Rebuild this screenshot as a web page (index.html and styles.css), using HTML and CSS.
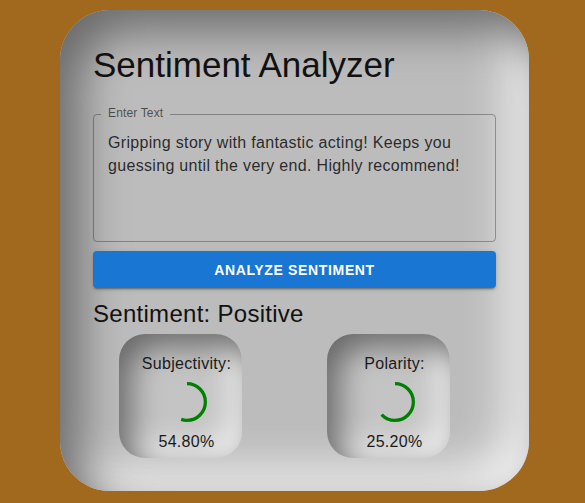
FILE: index.html
```html
<!DOCTYPE html>
<html lang="en">
<head>
<meta charset="utf-8">
<title>Sentiment Analyzer</title>
<link rel="stylesheet" href="styles.css">
</head>
<body>
<main class="card">
  <h1 class="title">Sentiment Analyzer</h1>
  <fieldset class="field">
    <legend class="field-label">Enter Text</legend>
    <textarea class="field-input" rows="4">Gripping story with fantastic acting! Keeps you guessing until the very end. Highly recommend!</textarea>
  </fieldset>
  <button class="analyze" type="button">Analyze Sentiment</button>
  <h2 class="result">Sentiment: Positive</h2>
  <div class="metrics">
    <div class="metric">
      <div class="metric-box">
        <p class="metric-label">Subjectivity:</p>
        <svg class="ring" width="40" height="40" viewBox="22 22 44 44">
          <circle cx="44" cy="44" r="20.2" fill="none" stroke="#008000" stroke-width="3.6" stroke-dasharray="126.92" stroke-dashoffset="57.37"></circle>
        </svg>
        <p class="metric-value">54.80%</p>
      </div>
    </div>
    <div class="metric">
      <div class="metric-box">
        <p class="metric-label">Polarity:</p>
        <svg class="ring" width="40" height="40" viewBox="22 22 44 44">
          <circle cx="44" cy="44" r="20.2" fill="none" stroke="#008000" stroke-width="3.6" stroke-dasharray="126.92" stroke-dashoffset="47.47"></circle>
        </svg>
        <p class="metric-value">25.20%</p>
      </div>
    </div>
  </div>
</main>
</body>
</html>
```
FILE: styles.css
```css
html, body {
  margin: 0;
  padding: 0;
}
body {
  background: #a0691e;
  font-family: "Liberation Sans", Arial, sans-serif;
  color: rgba(0, 0, 0, 0.87);
  padding-top: 10px;
  height: 503px;
  box-sizing: border-box;
  overflow: hidden;
}
.card {
  box-sizing: border-box;
  width: 469px;
  margin-left: 60px;
  padding: 34px 33px 33px;
  border-radius: 50px;
  background: #bcbcbc;
  box-shadow: inset 20px 20px 45px #6a6a6a, inset -20px -20px 45px #f6f6f6;
}
.title {
  margin: 0;
  font-size: 35px;
  font-weight: 400;
  line-height: 42px;
  letter-spacing: 0;
  color: #111;
}
.field {
  margin: 21px 0 0;
  padding: 0 7px;
  border: 1px solid rgba(0, 0, 0, 0.3);
  border-radius: 4px;
  min-width: 0;
}
.field-label {
  padding: 0 7px 3px;
  font-size: 12px;
  line-height: 12px;
  letter-spacing: 0.15px;
  color: rgba(0, 0, 0, 0.6);
}
.field-input {
  display: block;
  box-sizing: border-box;
  width: 100%;
  height: 119px;
  margin: 0;
  padding: 8.5px 7px 0;
  border: 0;
  background: transparent;
  resize: none;
  overflow: hidden;
  font-family: "Liberation Sans", Arial, sans-serif;
  font-size: 16px;
  line-height: 23px;
  letter-spacing: 0.32px;
  color: rgba(0, 0, 0, 0.8);
  outline: none;
}
.analyze {
  display: block;
  width: 100%;
  height: 37px;
  margin-top: 9px;
  border: 0;
  border-radius: 4px;
  background: #1976d2;
  color: #fff;
  font-family: "Liberation Sans", Arial, sans-serif;
  font-size: 14px;
  font-weight: 700;
  letter-spacing: 0.65px;
  text-transform: uppercase;
  box-shadow: 0 3px 1px -2px rgba(0, 0, 0, 0.2), 0 2px 2px 0 rgba(0, 0, 0, 0.14), 0 1px 5px 0 rgba(0, 0, 0, 0.12);
}
.result {
  margin: 10px 0 0;
  font-size: 24px;
  font-weight: 400;
  line-height: 32px;
  letter-spacing: 0.28px;
  color: #111;
}
.metrics {
  margin-top: 4px;
  display: grid;
  grid-template-columns: 1fr 1fr;
  column-gap: 13px;
}
.metric {
  padding-left: 26px;
}
.metric-box {
  box-sizing: border-box;
  width: 123px;
  height: 124px;
  padding: 18px 0 4px 12px;
  border-radius: 26px;
  background: #c4c4c4;
  box-shadow: inset 12px 12px 30px #686868, inset -12px -12px 30px #f4f4f4;
  display: flex;
  flex-direction: column;
  align-items: center;
}
.metric-label,
.metric-value {
  margin: 0;
  font-size: 16px;
  line-height: 24px;
  letter-spacing: 0.3px;
  color: #1a1a1a;
}
.ring {
  display: block;
  margin: 6px 0 8px;
  transform: rotate(-90deg);
}
```
